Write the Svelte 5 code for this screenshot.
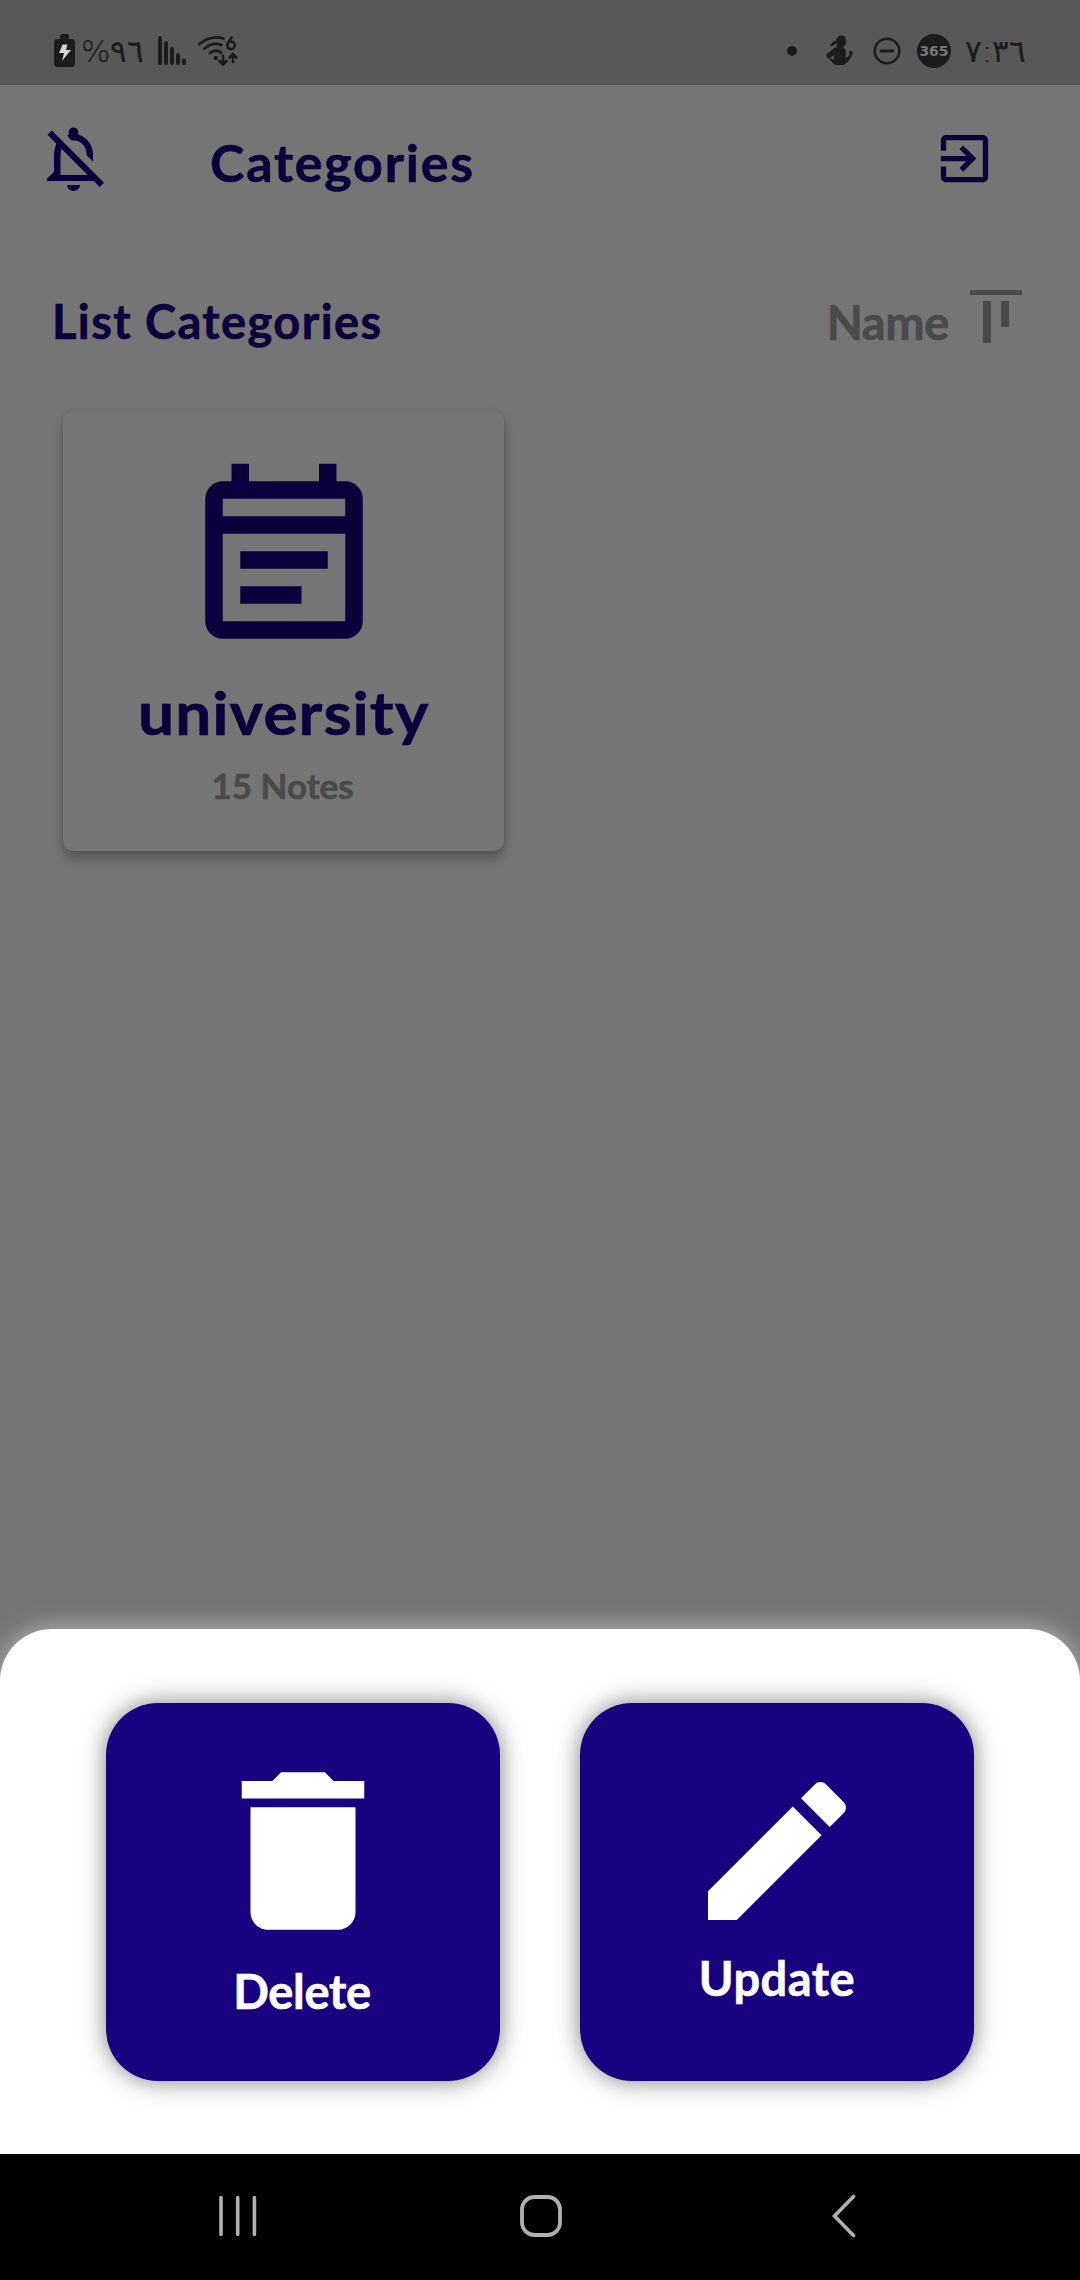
<script>
  const actions = [
    {
      label: 'Delete',
      size: 210,
      path: 'M6 7v12c0 1.1.9 2 2 2h8c1.1 0 2-.9 2-2V7H6zM19 4h-3.5l-1-1h-5l-1 1H5v2h14V4z'
    },
    {
      label: 'Update',
      size: 184,
      path: 'M3 17.25V21h3.75L17.81 9.94l-3.75-3.75L3 17.25zM20.71 7.04c.39-.39.39-1.02 0-1.41l-2.34-2.34c-.39-.39-1.02-.39-1.41 0l-1.83 1.83 3.75 3.75 1.83-1.83z'
    }
  ];
</script>

<div class="screen">
  <div class="status">
    <div class="status-left">
      <svg width="22" height="34" viewBox="0 0 22 34">
        <path fill="#1c1c1c" d="M6 2q0-2 2-2h5q2 0 2 2v3h2q4 0 4 4v20q0 4-4 4H4q-4 0-4-4V9q0-4 4-4h2z" />
        <path fill="#d4d4d4" d="M8.500 10.500h5L12 16h5L8 27l2-8H5z" />
      </svg>
      <span class="battery">%٩٦</span>
      <svg class="signal" width="29" height="32" viewBox="0 0 29 32">
        <path stroke="#1c1c1c" stroke-width="4" stroke-linecap="round" d="M2 3v25M8 8v20M14 14v14M20 20v8M26 25.500v2.500" />
      </svg>
      <svg class="wifi" width="42" height="32" viewBox="197 35 42 32">
        <g fill="none" stroke="#1c1c1c" stroke-width="2.800" stroke-linecap="round">
          <path d="M199.500 44Q211 34.500 223.500 38.500M204.500 48.500Q213 41.500 221.500 45M210 53Q215.500 48.500 221 52.500" />
          <path d="M231.500 37.500L227.800 43.500M223 55.500V64M219.500 61L223 64.500L226.500 61M233 62V54.500M229.500 57.500L233 54L236.500 57.500" stroke-width="2.600" />
          <circle cx="231" cy="45.300" r="3.800" stroke-width="2.600" />
        </g>
        <circle cx="215.700" cy="58" r="2.200" fill="#1c1c1c" />
      </svg>
    </div>
    <div class="status-right">
      <svg width="10" height="10" viewBox="0 0 10 10"><circle cx="5" cy="5" r="5" fill="#1c1c1c" /></svg>
      <svg class="person" width="28" height="32" viewBox="826 36 28 32">
        <path fill="#1c1c1c" fill-rule="evenodd" d="M836 42c0-7 10-7.500 10-.500 0 1.500-.5 3-.5 4.500l-2 1 .5 2c2 1 2 4 1.500 7v3l4.500-3-1-3c1-2 3.500-2 3.500 1.500 0 3-2 5-4.500 8-1.500 2-3 3-5 3.500h-7c-2-.5-3-1.500-5-4l-4-4c-1-1-1-2 0-3l6-5c1-1 2-1.500 3.500-2l.5-2-.5-2c-2 2.500-4.500 3.200-6.500 3 1.500-2.500 3-5 6-5zM834 56l-4 3 4 2z" />
      </svg>
      <svg class="dnd" width="28" height="28" viewBox="0 0 28 28">
        <circle cx="14" cy="14" r="12.300" fill="none" stroke="#1c1c1c" stroke-width="2.500" />
        <path d="M8 14h12" stroke="#1c1c1c" stroke-width="2.800" stroke-linecap="round" />
      </svg>
      <span class="badge">365</span>
      <span class="time">٧:٣٦</span>
    </div>
  </div>

  <header>
    <svg class="bell" width="64" height="70" viewBox="44 124 64 70" fill="#0b003b">
      <path d="M57 142C55 147 54 151 54 156V172L47 178.500V181H97L90 175H60.500V156C60.500 153 61 150 62 147Z" />
      <path d="M67 135.500L68.700 134.800V132.200a4.800 4.800 0 0 1 9.600 0V134.800C87 137 93 145 93 155V161.500L86.500 155C86.500 146 81 140.500 74 140.500H71.500Z" />
      <path d="M47.500 134.800L51.800 130.500L104 182.700L99.700 187ZM67 185h13a6.500 6 0 0 1-13 0z" />
    </svg>
    <h1>Categories</h1>
    <svg class="exit" width="63" height="63" viewBox="0 0 24 24" fill="#0b003b">
      <path d="M10.090 15.590L11.500 17l5-5-5-5-1.410 1.410L12.670 11H3v2h9.670l-2.580 2.590zM19 3H5c-1.110 0-2 .9-2 2v4h2V5h14v14H5v-4H3v4c0 1.100.89 2 2 2h14c1.100 0 2-.9 2-2V5c0-1.100-.9-2-2-2z" />
    </svg>
  </header>

  <section class="list-head">
    <h2>List Categories</h2>
    <div class="sort">
      <span>Name</span>
      <svg width="52" height="53" viewBox="0 0 52 53" fill="#4a4a4a">
        <path d="M0 0h52v5H0zM13 11h8v42h-8zM31 11h8v26h-8z" />
      </svg>
    </div>
  </section>

  <main>
    <article class="card">
      <svg width="210" height="210" viewBox="0 0 24 24" fill="#0b003b">
        <path fill-rule="evenodd" d="M19 3h-1V1h-2v2H8V1H6v2H5a2 2 0 0 0-2 2v14a2 2 0 0 0 2 2h14a2 2 0 0 0 2-2V5a2 2 0 0 0-2-2zM19 19H5V9h14zM19 7H5V5h14zM7 11h10v2H7zM7 15h7v2H7z" />
      </svg>
      <h3>university</h3>
      <p>15 Notes</p>
    </article>
  </main>

  <div class="sheet">
    {#each actions as action}
      <button class={action.label.toLowerCase()}>
        <svg width={action.size} height={action.size} viewBox="0 0 24 24" fill="#fff"><path d={action.path} /></svg>
        <span>{action.label}</span>
      </button>
    {/each}
  </div>

  <nav>
    <svg width="42" height="44" viewBox="0 0 42 44" fill="none" stroke="#b0b0b0" stroke-width="3.600" stroke-linecap="round">
      <path d="M4 3.500v37M20.700 3.500v37M37.400 3.500v37" />
    </svg>
    <svg width="44" height="44" viewBox="0 0 44 44" fill="none" stroke="#b0b0b0" stroke-width="3.800">
      <rect x="3" y="3" width="38" height="38" rx="12.500" />
    </svg>
    <svg width="28" height="44" viewBox="0 0 28 44" fill="none" stroke="#b0b0b0" stroke-width="3.600" stroke-linecap="round">
      <path d="M23.500 2.500L4.500 22L23.500 41.500" />
    </svg>
  </nav>
</div>

<style>
  :global(body) {
    margin: 0;
    background: #757575;
  }
  .screen {
    width: 1080px;
    height: 2280px;
    display: flex;
    flex-direction: column;
    overflow: hidden;
    background: #757575;
    color: #0b003b;
    font-family: Lato, 'Open Sans', sans-serif;
    font-weight: 700;
  }
  svg {
    display: block;
    flex: none;
  }
  h1, h2, h3, p {
    margin: 0;
    font-weight: 700;
    white-space: nowrap;
  }
  h1, h2, h3, p, .sort span, button span {
    -webkit-text-stroke: 0.6px currentColor;
  }
  .status {
    box-sizing: border-box;
    height: 85px;
    padding: 17px 54px 0;
    display: flex;
    justify-content: space-between;
    align-items: center;
    background: #585858;
    color: #1c1c1c;
  }
  .status-left,
  .status-right {
    display: flex;
    align-items: center;
    font: 200 31px/40px 'DejaVu Sans Light', 'DejaVu Sans', sans-serif;
    -webkit-text-stroke: 0.2px #1c1c1c;
    white-space: nowrap;
  }
  .battery {
    width: 77px;
    padding-left: 5px;
    letter-spacing: -0.7px;
  }
  .wifi {
    margin-left: 10px;
  }
  .person {
    margin-left: 29px;
  }
  .dnd {
    margin-left: 19px;
  }
  .badge {
    width: 34px;
    height: 34px;
    margin-left: 16px;
    border-radius: 50%;
    background: #1c1c1c;
    color: #757575;
    font: 700 14px/34px 'DejaVu Sans', sans-serif;
    text-align: center;
    -webkit-text-stroke: 0;
  }
  .time {
    width: 61px;
    margin-left: 14px;
  }
  header {
    box-sizing: border-box;
    height: 153px;
    display: flex;
    align-items: flex-start;
    padding: 39px 84px 0 44px;
  }
  h1 {
    margin: 7px auto 0 102px;
    font-size: 52px;
    line-height: 62px;
    letter-spacing: 1.75px;
  }
  .exit {
    margin-top: 3px;
  }
  .list-head {
    height: 173px;
    padding: 52px 58px 0 52px;
    box-sizing: border-box;
    display: flex;
    align-items: flex-start;
    justify-content: space-between;
  }
  h2 {
    margin-top: 1px;
    font-size: 47px;
    line-height: 60px;
    letter-spacing: 1.4px;
  }
  .sort {
    display: flex;
    gap: 21px;
    font-size: 47px;
    line-height: 60px;
    color: #4a4a4a;
  }
  .sort span {
    margin-top: 2px;
    letter-spacing: -0.4px;
  }
  main {
    flex: 1;
    padding-left: 63px;
  }
  .card {
    box-sizing: border-box;
    width: 441px;
    height: 440px;
    padding-top: 44px;
    display: flex;
    flex-direction: column;
    align-items: center;
    border-radius: 10px;
    background: #757575;
    box-shadow: 0 7px 12px rgba(0, 0, 0, 0.28), 0 0 4px rgba(0, 0, 0, 0.08);
  }
  h3 {
    margin-top: 11px;
    font-size: 60px;
    line-height: 72px;
    letter-spacing: 1px;
    transform: scaleX(1.065);
  }
  p {
    margin: 16px 2px 0 0;
    font-size: 35px;
    line-height: 42px;
    color: #4a4a4a;
  }
  .sheet {
    box-sizing: border-box;
    height: 525px;
    padding: 73.5px 106px 0;
    display: flex;
    justify-content: space-between;
    align-items: flex-start;
    border-radius: 52px 52px 0 0;
    background: #fff;
    box-shadow: 0 0 24px rgba(255, 255, 255, 0.5);
  }
  button {
    width: 394px;
    height: 378px;
    padding: 0;
    border: 0;
    border-radius: 52px;
    display: flex;
    flex-direction: column;
    align-items: center;
    justify-content: center;
    background: #180280;
    color: #fff;
    font: inherit;
    font-size: 47px;
    line-height: 70px;
    box-shadow: 0 0 24px rgba(0, 0, 0, 0.5);
  }
  button span {
    padding-bottom: 12px;
  }
  .delete span {
    letter-spacing: -0.3px;
    padding-right: 2px;
  }
  .update span {
    letter-spacing: 0.5px;
  }
  nav {
    height: 126px;
    flex: none;
    box-sizing: border-box;
    padding: 0 85px 3px 87px;
    display: grid;
    grid-template-columns: repeat(3, 1fr);
    align-items: center;
    justify-items: center;
    background: #000;
  }
</style>
